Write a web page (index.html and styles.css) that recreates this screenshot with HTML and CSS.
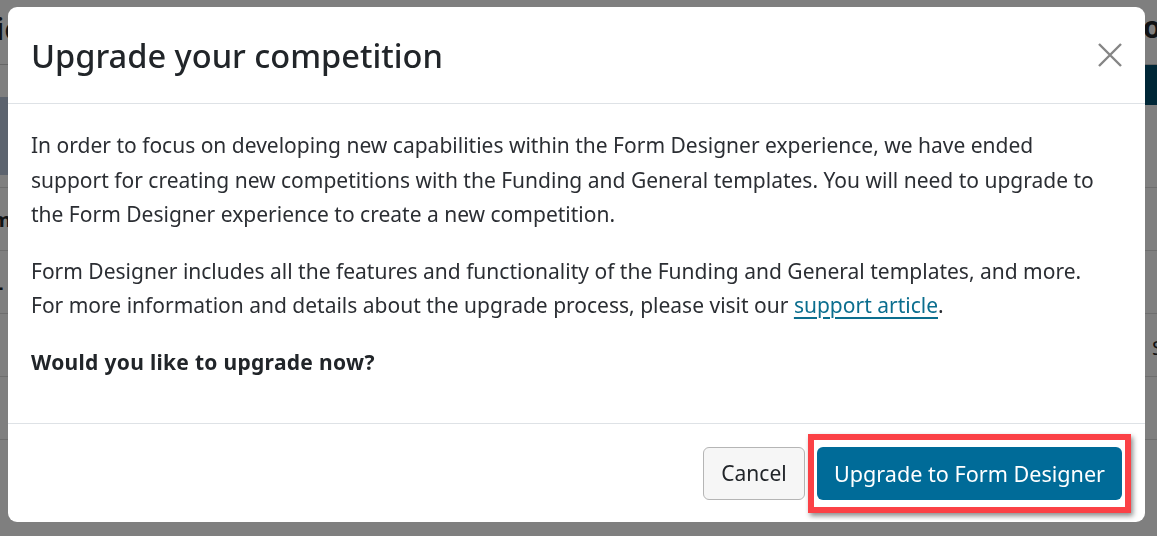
FILE: index.html
```html
<!DOCTYPE html>
<html lang="en">
<head>
  <meta charset="UTF-8">
  <meta name="viewport" content="width=device-width, initial-scale=1.0">
  <title>Competitions</title>
  <link rel="stylesheet" href="styles.css">
</head>
<body>
  <!-- Page behind the dialog -->
  <div class="page">
    <div class="page-head">
      <h1 class="page-title">Manage your competitions</h1>
      <h2 class="page-side">Action</h2>
    </div>
    <div class="page-row">
      <div class="page-band"></div>
      <div class="page-bar"></div>
    </div>
    <div class="page-list">
      <div class="page-line"><span class="page-label">m</span></div>
      <div class="page-line"><span class="page-label">L</span></div>
      <div class="page-line"><span class="page-label"></span><span class="page-end">S</span></div>
      <div class="page-line"></div>
    </div>
  </div>

  <div class="backdrop"></div>

  <!-- Upgrade dialog -->
  <div class="modal">
    <div class="modal-dialog">
      <div class="modal-header">
        <h3 class="modal-title">Upgrade your competition</h3>
        <button class="close-btn" aria-label="Close">
          <svg width="26" height="26" viewBox="0 0 26 26">
            <path d="M2 2 L24 24 M24 2 L2 24" stroke="#858585" stroke-width="2.4" fill="none"/>
          </svg>
        </button>
      </div>
      <div class="modal-body">
        <p>In order to focus on developing new capabilities within the Form Designer experience, we have ended<br>
          support for creating new competitions with the Funding and General templates. You will need to upgrade to<br>
          the Form Designer experience to create a new competition.</p>
        <p>Form Designer includes all the features and functionality of the Funding and General templates, and more.<br>
          For more information and details about the upgrade process, please visit our <a href="#">support article</a>.</p>
        <p class="question">Would you like to upgrade now?</p>
      </div>
      <div class="modal-footer">
        <button class="btn btn-cancel">Cancel</button>
        <span class="highlight">
          <button class="btn btn-primary">Upgrade to Form Designer</button>
        </span>
      </div>
    </div>
  </div>
</body>
</html>
```

FILE: styles.css
```css
/* Page */
body {
  margin: 0;
  font-family: "Noto Sans", "Open Sans", sans-serif;
  color: #212529;
  background: #fff;
  overflow: hidden;
}

.page {
  height: 536px;
}

.page-head {
  display: flex;
  justify-content: space-between;
  height: 64px;
  border-bottom: 1px solid #ccc;
}

.page-title {
  margin: 8px 0 0 -330px;
  font-size: 30px;
  font-weight: 500;
}

.page-side {
  margin: 6px -24px 0 0;
  font-size: 30px;
  font-weight: 700;
}

.page-row {
  display: flex;
  justify-content: space-between;
  height: 122px;
  border-bottom: 1px solid #ddd;
}

.page-band {
  width: 20px;
  height: 78px;
  margin-top: 32px;
  background: #b8c6dc;
}

.page-bar {
  width: 30px;
  height: 40px;
  background: #004f6e;
}

.page-line {
  display: flex;
  justify-content: space-between;
  height: 62px;
  border-bottom: 1px solid #ddd;
  font-size: 20px;
  font-weight: 700;
}

.page-label {
  padding-top: 18px;
  margin-left: -8px;
}

.page-end {
  padding-top: 20px;
  font-weight: 400;
  margin-right: -6px;
}

.backdrop {
  position: fixed;
  inset: 0;
  background: rgba(0, 0, 0, 0.5);
}

/* Dialog */
.modal {
  position: fixed;
  inset: 0;
  padding: 7px 12px 0 8px;
}

.modal-dialog {
  background: #fff;
  border-radius: 9px;
  overflow: hidden;
}

.modal-header {
  display: flex;
  align-items: center;
  justify-content: space-between;
  height: 96px;
  padding: 0 22px 0 23px;
  border-bottom: 1px solid #dee2e6;
}

.modal-title {
  margin: 0;
  font-size: 32.6px;
  font-weight: 500;
  color: #212529;
}

.close-btn {
  padding: 0;
  border: none;
  background: none;
  display: flex;
}

.modal-body {
  padding: 24px 23px 22px;
  font-size: 21px;
  line-height: 34.5px;
  color: #2b2e33;
  white-space: nowrap;
}

.modal-body p {
  margin: 0 0 22px;
}

.modal-body p.question {
  font-weight: 700;
  letter-spacing: 0.3px;
  color: #212529;
}

.modal-body a {
  color: #0b6e8e;
  text-decoration: underline;
  text-decoration-thickness: 2px;
  text-underline-offset: 4px;
}

.modal-footer {
  display: flex;
  justify-content: flex-end;
  align-items: center;
  gap: 3px;
  height: 98px;
  padding: 0 14px 0 23px;
  border-top: 1px solid #dee2e6;
}

.btn {
  height: 53px;
  border-radius: 6px;
  font-family: inherit;
  font-size: 21px;
  cursor: pointer;
}

.btn-cancel {
  width: 102px;
  border: 1px solid #b5b5b5;
  background: #f6f6f6;
  color: #212529;
}

.btn-primary {
  width: 305px;
  border: none;
  background: #006b98;
  color: #fff;
  font-size: 21.6px;
}

.highlight {
  display: flex;
  padding: 7px 3px;
  border: 6px solid #fb4146;
  box-shadow: 2px 3px 5px rgba(0, 0, 0, 0.45);
}
```
